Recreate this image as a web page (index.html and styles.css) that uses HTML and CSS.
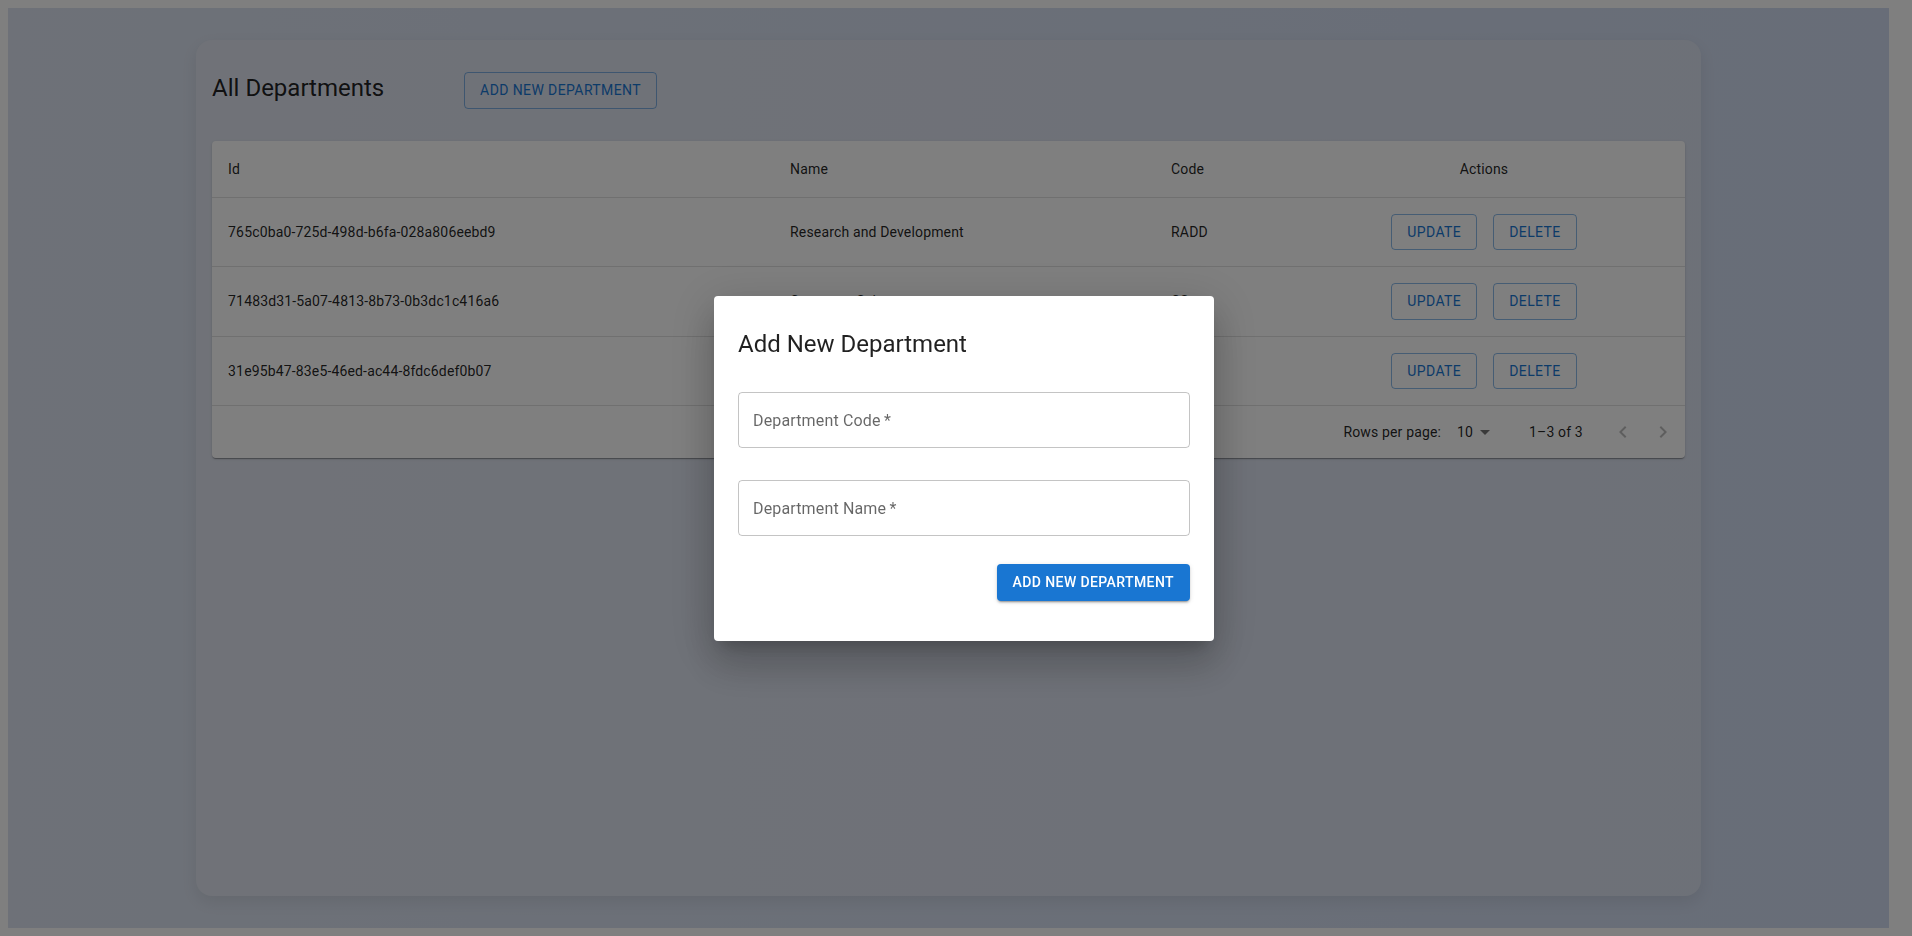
FILE: index.html
```html
<!DOCTYPE html>
<html lang="en">
<head>
<meta charset="utf-8">
<title>All Departments</title>
<link rel="stylesheet" href="styles.css">
</head>
<body>
<div class="page">
  <div class="card">
    <div class="card-head">
      <h1 class="card-title">All Departments</h1>
      <button class="btn btn-outlined">Add New Department</button>
    </div>
    <div class="paper">
      <table class="dept-table">
        <colgroup>
          <col class="col-id">
          <col class="col-name">
          <col class="col-code">
          <col class="col-actions">
        </colgroup>
        <thead>
          <tr>
            <th>Id</th>
            <th>Name</th>
            <th>Code</th>
            <th class="center">Actions</th>
          </tr>
        </thead>
        <tbody>
          <tr>
            <td>765c0ba0-725d-498d-b6fa-028a806eebd9</td>
            <td>Research and Development</td>
            <td>RADD</td>
            <td class="center"><div class="actions"><button class="btn btn-outlined">Update</button><button class="btn btn-outlined">Delete</button></div></td>
          </tr>
          <tr>
            <td>71483d31-5a07-4813-8b73-0b3dc1c416a6</td>
            <td>Computer Science</td>
            <td>CS</td>
            <td class="center"><div class="actions"><button class="btn btn-outlined">Update</button><button class="btn btn-outlined">Delete</button></div></td>
          </tr>
          <tr>
            <td>31e95b47-83e5-46ed-ac44-8fdc6def0b07</td>
            <td>Human Resources</td>
            <td>HR</td>
            <td class="center"><div class="actions"><button class="btn btn-outlined">Update</button><button class="btn btn-outlined">Delete</button></div></td>
          </tr>
        </tbody>
      </table>
      <div class="pagination">
        <span class="pg-label">Rows per page:</span>
        <span class="pg-select">10<svg class="pg-drop" viewBox="0 0 24 24" width="24" height="24"><path d="M7 10l5 5 5-5z"/></svg></span>
        <span class="pg-rows">1–3 of 3</span>
        <div class="pg-actions">
          <span class="icon-btn"><svg viewBox="0 0 24 24" width="24" height="24"><path d="M15.41 16.59 10.83 12l4.58-4.59L14 6l-6 6 6 6 1.41-1.41z"/></svg></span>
          <span class="icon-btn"><svg viewBox="0 0 24 24" width="24" height="24"><path d="M8.59 16.59 13.17 12 8.59 7.41 10 6l6 6-6 6-1.41-1.41z"/></svg></span>
        </div>
      </div>
    </div>
  </div>
</div>

<div class="backdrop"></div>

<div class="modal">
  <h2 class="modal-title">Add New Department</h2>
  <div class="field">Department Code&thinsp;*</div>
  <div class="field field-last">Department Name&thinsp;*</div>
  <div class="modal-actions">
    <button class="btn btn-contained">Add New Department</button>
  </div>
</div>
</body>
</html>
```

FILE: styles.css
```css
html {
  background: #ffffff;
}

body {
  margin: 8px;
  padding-right: 15px;
  overflow: hidden;
  font-family: Roboto, "Noto Sans", sans-serif;
  color: rgba(0, 0, 0, 0.87);
}

.page {
  height: 920px;
  box-sizing: border-box;
  padding: 32px 0;
  background: linear-gradient(90deg, #dce3f0 0%, #d6dff0 50%, #d0dbf0 100%);
}

.card {
  width: 80%;
  height: 100%;
  margin: 0 auto;
  box-sizing: border-box;
  padding: 32px 16px;
  border-radius: 16px;
  background: rgba(230, 232, 240, 0.5);
  box-shadow: 0 6px 16px rgba(0, 0, 0, 0.08);
}

.card-head {
  display: flex;
  align-items: flex-start;
  margin-bottom: 32px;
}

.card-title {
  width: 252px;
  flex-shrink: 0;
  margin: 0;
  font-size: 24px;
  font-weight: 400;
  line-height: 32px;
  color: rgba(0, 0, 0, 0.87);
}

.btn {
  font-family: Roboto, "Noto Sans", sans-serif;
  font-size: 14px;
  font-weight: 500;
  line-height: 24.5px;
  letter-spacing: 0.4px;
  text-transform: uppercase;
  border-radius: 4px;
  cursor: pointer;
  white-space: nowrap;
}

.btn-outlined {
  padding: 5px 15px;
  border: 1px solid rgba(25, 118, 210, 0.5);
  background: transparent;
  color: #1976d2;
  font-weight: 400;
}

.btn-contained {
  padding: 6px 16px;
  border: 0;
  background: #1976d2;
  color: #ffffff;
  box-shadow: 0 3px 1px -2px rgba(0, 0, 0, 0.2), 0 2px 2px 0 rgba(0, 0, 0, 0.14), 0 1px 5px 0 rgba(0, 0, 0, 0.12);
}

.paper {
  background: #ffffff;
  border-radius: 4px;
  overflow: hidden;
  box-shadow: 0 2px 1px -1px rgba(0, 0, 0, 0.2), 0 1px 1px 0 rgba(0, 0, 0, 0.14), 0 1px 3px 0 rgba(0, 0, 0, 0.12);
}

.dept-table {
  width: 100%;
  border-collapse: collapse;
  table-layout: fixed;
}

.col-id { width: 562px; }
.col-name { width: 381px; }
.col-code { width: 128px; }
.col-actions { width: auto; }

.dept-table th,
.dept-table td {
  padding: 16px;
  border-bottom: 1px solid #e0e0e0;
  text-align: left;
  font-size: 14px;
  color: rgba(0, 0, 0, 0.87);
  letter-spacing: 0.15px;
  vertical-align: middle;
}

.dept-table th {
  font-weight: 400;
  line-height: 24px;
}

.dept-table td {
  font-weight: 400;
  line-height: 20px;
}

.dept-table .center {
  text-align: center;
}

.actions {
  display: flex;
  justify-content: center;
  gap: 16px;
}

.pagination {
  display: flex;
  align-items: center;
  justify-content: flex-end;
  min-height: 52px;
  padding: 0 2px 0 16px;
  font-size: 14px;
  letter-spacing: 0.15px;
  color: rgba(0, 0, 0, 0.87);
}

.pg-select {
  display: inline-flex;
  align-items: center;
  margin: 0 32px 0 8px;
  padding-left: 8px;
}

.pg-drop {
  fill: rgba(0, 0, 0, 0.54);
}

.pg-actions {
  display: flex;
  margin-left: 20px;
}

.icon-btn {
  display: inline-flex;
  width: 40px;
  height: 40px;
  align-items: center;
  justify-content: center;
}

.icon-btn svg {
  fill: rgba(0, 0, 0, 0.26);
}

.backdrop {
  position: fixed;
  inset: 0;
  background: rgba(0, 0, 0, 0.5);
}

.modal {
  position: fixed;
  top: 296px;
  left: 714px;
  width: 500px;
  box-sizing: border-box;
  padding: 32px 24px 40px;
  background: #ffffff;
  border-radius: 4px;
  box-shadow: 0 11px 15px -7px rgba(0, 0, 0, 0.2), 0 24px 38px 3px rgba(0, 0, 0, 0.14), 0 9px 46px 8px rgba(0, 0, 0, 0.12);
}

.modal-title {
  margin: 0 0 32px;
  font-size: 24px;
  font-weight: 400;
  line-height: 32px;
  color: rgba(0, 0, 0, 0.87);
}

.field {
  display: flex;
  align-items: center;
  height: 56px;
  box-sizing: border-box;
  padding: 0 14px;
  margin-bottom: 32px;
  border: 1px solid rgba(0, 0, 0, 0.23);
  border-radius: 4px;
  font-size: 16px;
  letter-spacing: 0.15px;
  color: rgba(0, 0, 0, 0.6);
}

.field-last {
  margin-bottom: 28px;
}

.modal-actions {
  display: flex;
  justify-content: flex-end;
}
```
